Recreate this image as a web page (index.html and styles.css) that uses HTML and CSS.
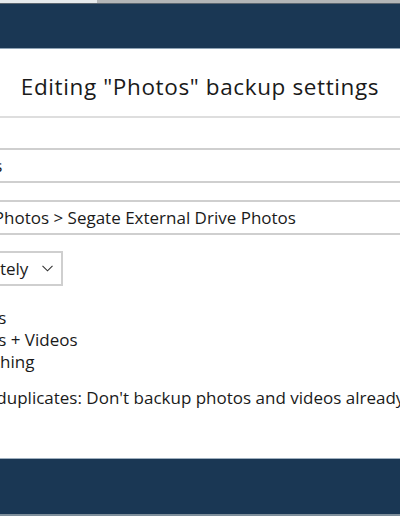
FILE: index.html
```html
<!DOCTYPE html>
<html>
<head>
<meta charset="utf-8">
<link rel="stylesheet" href="styles.css">
</head>
<body>
<div class="page">
  <div class="tabstrip"><div class="tab-active"></div><div class="tab-rest"></div></div>
  <header class="appbar"></header>
  <div class="dialog-head">
    <h1 class="title">Editing "Photos" backup settings</h1>
  </div>
  <div class="form">
    <div class="field field-name"><span class="field-text">Photos</span></div>
    <div class="field field-path"><span class="field-text">iCloud Photos &gt; Segate External Drive Photos</span></div>
    <div class="select">
      <span class="select-text">Immediately</span>
      <svg class="chevron" width="11" height="7" viewBox="0 0 11 7"><path d="M0.5 0.8 L5.5 5.8 L10.5 0.8" fill="none" stroke="#333" stroke-width="1.1"/></svg>
    </div>
    <div class="options">
      <label class="option"><span class="radio"></span>Photos</label>
      <label class="option"><span class="radio"></span>Photos + Videos</label>
      <label class="option"><span class="radio"></span>Everything</label>
    </div>
    <label class="check"><span class="box"></span>Skip duplicates: Don't backup photos and videos already backed up</label>
  </div>
  <footer class="bottombar"></footer>
</div>
</body>
</html>
```
FILE: styles.css
```css
html, body {
  margin: 0;
  padding: 0;
  background: #ffffff;
}
body {
  width: 400px;
  height: 516px;
  overflow: hidden;
  font-family: "Open Sans", "Noto Sans", sans-serif;
  color: #1a1a1a;
}
.page {
  display: flex;
  flex-direction: column;
  width: 400px;
  height: 516px;
  overflow: hidden;
}
.tabstrip {
  display: flex;
  height: 3px;
  border-bottom: 1px solid #5c6670;
  flex: none;
}
.tab-active {
  width: 97px;
  background: #e6eaed;
}
.tab-rest {
  flex: 1;
  background: #b3b6b8;
}
.appbar {
  height: 44px;
  background: #1a3754;
  border-bottom: 1px solid #8fa3b5;
  flex: none;
}
.dialog-head {
  height: 67px;
  border-bottom: 2px solid #dedede;
  display: flex;
  align-items: center;
  justify-content: center;
  flex: none;
}
.title {
  margin: 0;
  font-weight: 400;
  font-size: 22.5px;
  letter-spacing: 0.62px;
  padding-top: 8px;
  white-space: nowrap;
}
.form {
  margin-left: -80px;
  width: 620px;
  padding-top: 30px;
  display: flex;
  flex-direction: column;
  flex: 1;
  font-size: 17px;
}
.field {
  height: 31px;
  border: 2px solid #cfcfcf;
  display: flex;
  align-items: center;
  padding-left: 17px;
  white-space: nowrap;
}
.field-name {
  padding-left: 25px;
}
.field-path {
  margin-top: 17px;
}
.select {
  margin-top: 16px;
  align-self: flex-start;
  height: 31px;
  border: 2px solid #cfcfcf;
  display: flex;
  align-items: center;
  padding-left: 8px;
  padding-right: 8px;
  gap: 14px;
  white-space: nowrap;
}
.chevron {
  flex: none;
}
.options {
  margin-top: 20px;
  display: flex;
  flex-direction: column;
}
.option {
  height: 22px;
  display: flex;
  align-items: center;
  gap: 6px;
  padding-left: 9px;
  white-space: nowrap;
}
.radio {
  width: 14px;
  height: 14px;
  border: 1px solid #555;
  border-radius: 50%;
}
.check {
  margin-top: 14px;
  height: 22px;
  display: flex;
  align-items: center;
  gap: 6px;
  padding-left: 17px;
  white-space: nowrap;
}
.box {
  width: 14px;
  height: 14px;
  border: 1px solid #555;
}
.bottombar {
  height: 55px;
  background: #1a3754;
  border-top: 1px solid #9fb0bf;
  border-bottom: 2px solid #7e8e9b;
  flex: none;
}
```
